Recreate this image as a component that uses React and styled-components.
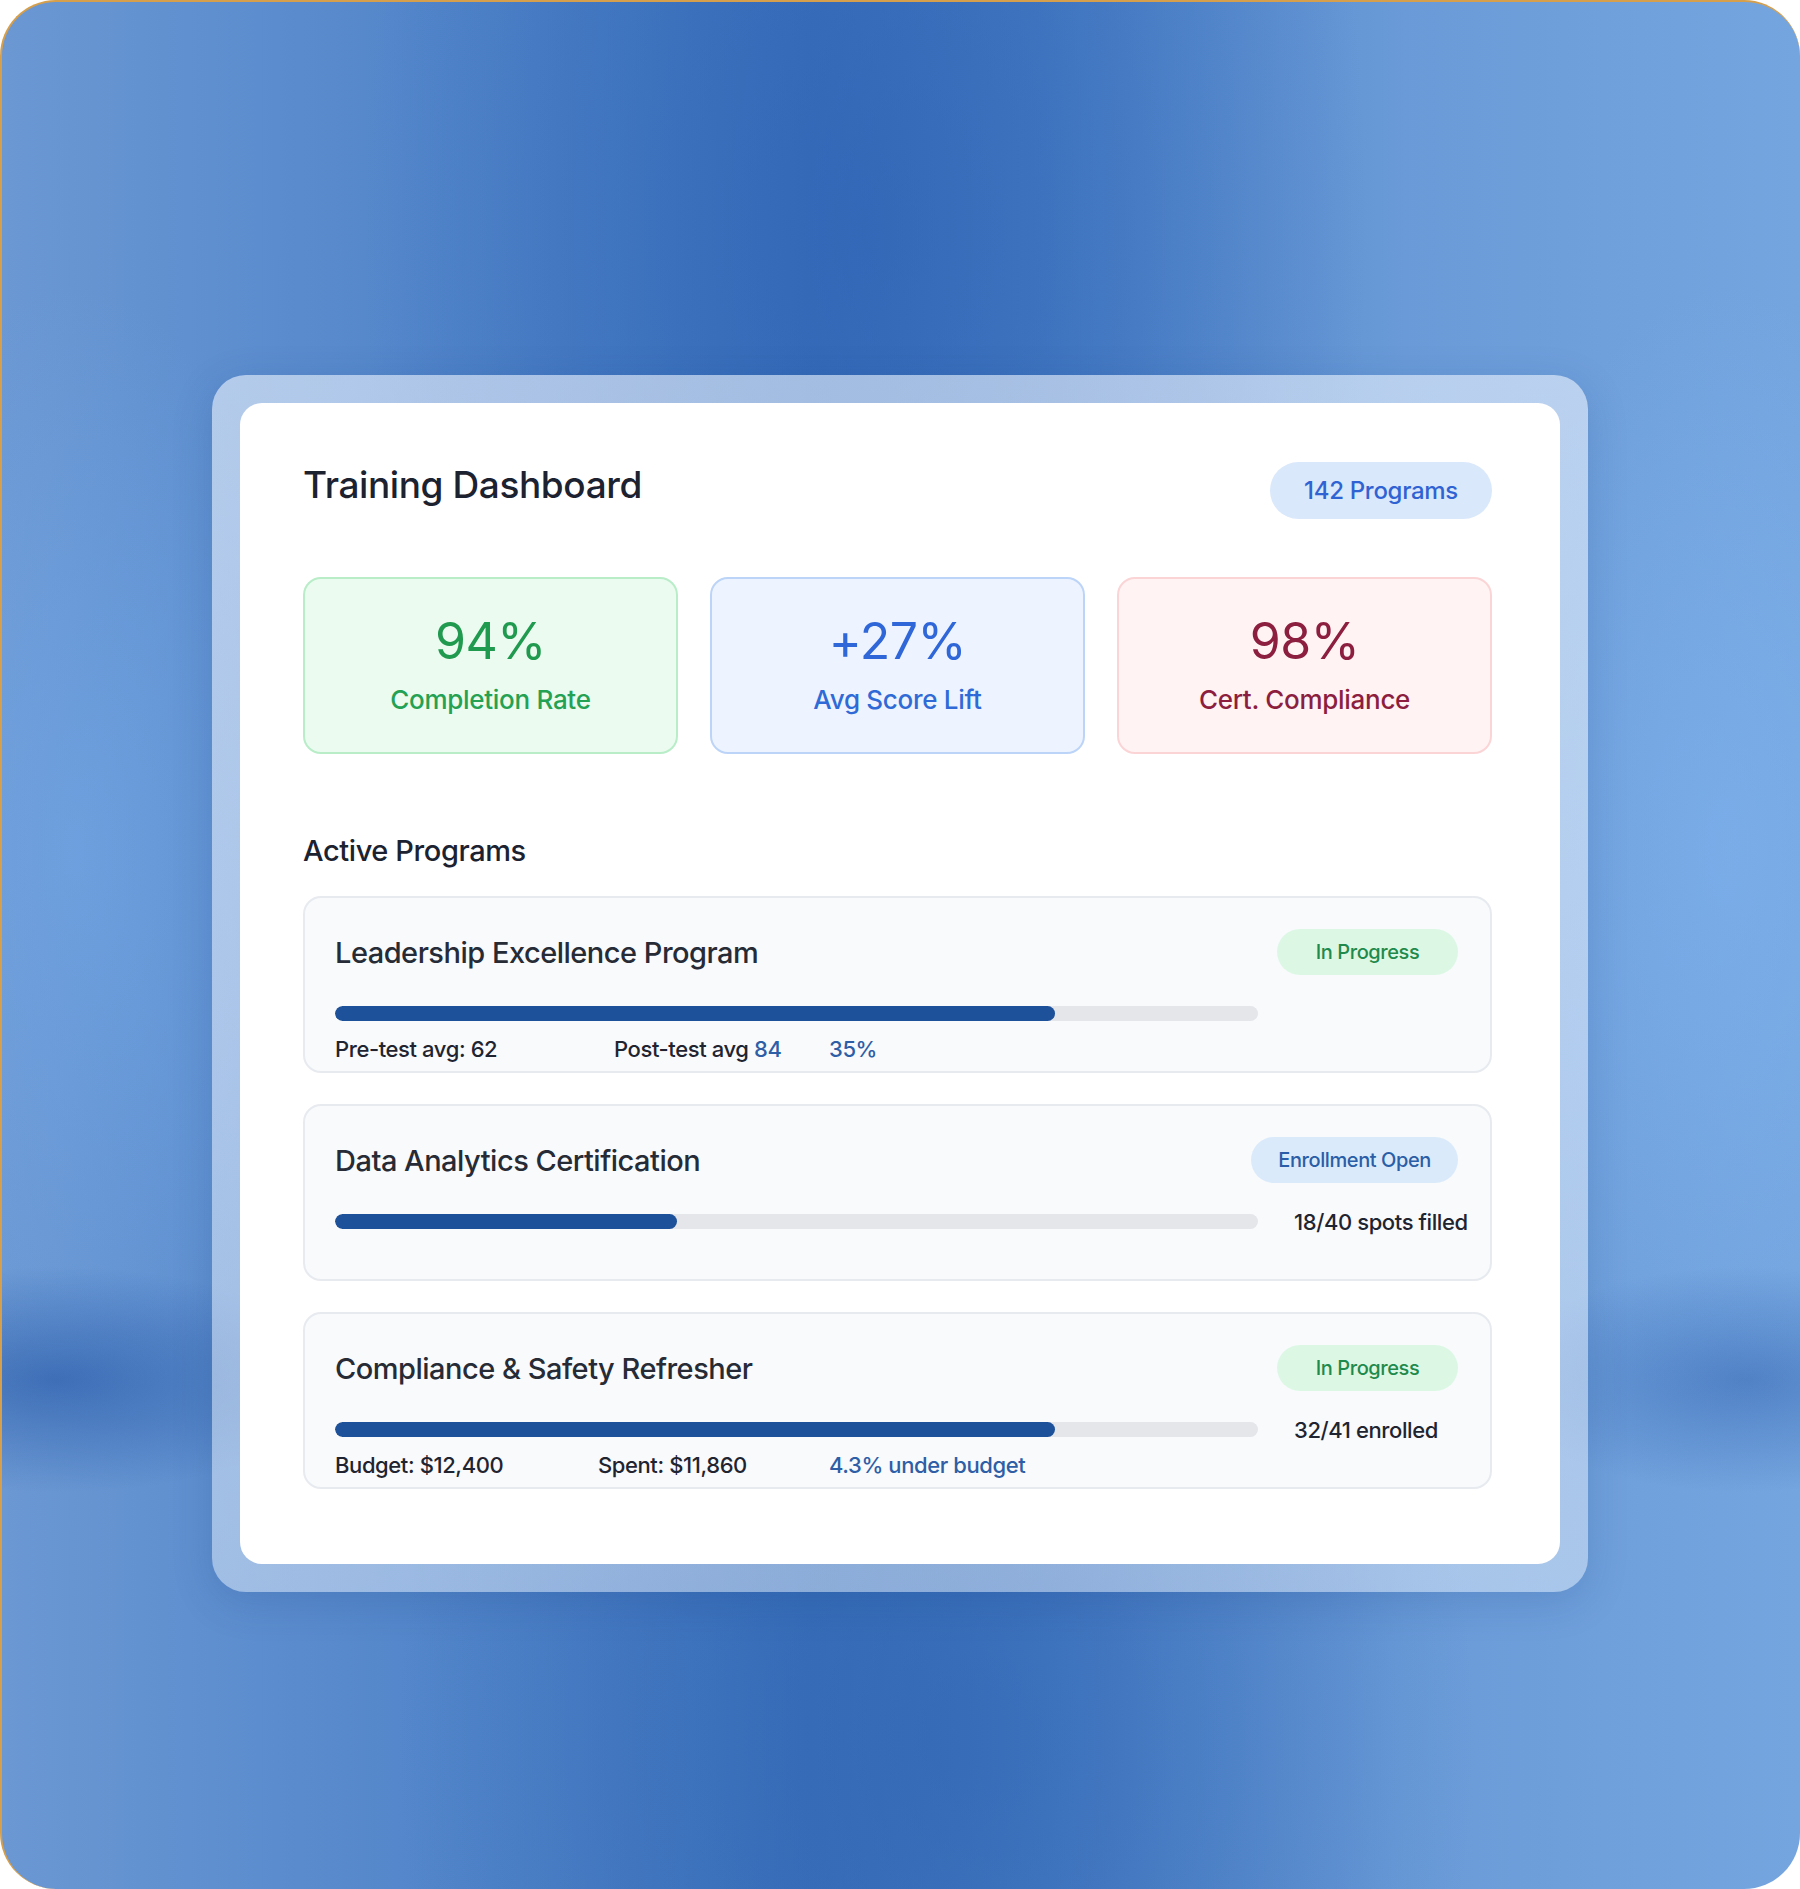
import React from "react";
import styled, { createGlobalStyle } from "styled-components";

const Global = createGlobalStyle`
  html, body { margin: 0; padding: 0; background: #ffffff; }
  body { font-family: Inter, "Noto Sans", "Liberation Sans", sans-serif; }
  * { box-sizing: border-box; }
`;

const Frame = styled.div`
  width: 1800px;
  height: 1889px;
  border-radius: 56px;
  border-top: 2px solid #d69f4c;
  border-left: 2px solid #d69f4c;
  overflow: hidden;
  display: flex;
  flex-direction: column;
  align-items: center;
  padding-top: 373px;
  padding-right: 2px;
  background:
    radial-gradient(ellipse 28% 55% at 48% 12%, rgba(38, 92, 176, 0.55), rgba(38, 92, 176, 0) 100%),
    radial-gradient(ellipse 30% 40% at 52% 92%, rgba(38, 92, 172, 0.5), rgba(38, 92, 172, 0) 100%),
    radial-gradient(ellipse 16% 6% at 3% 73%, rgba(28, 78, 160, 0.55), rgba(28, 78, 160, 0) 100%),
    radial-gradient(ellipse 14% 6% at 97% 73%, rgba(28, 78, 160, 0.4), rgba(28, 78, 160, 0) 100%),
    radial-gradient(ellipse 14% 30% at 96% 45%, rgba(130, 185, 245, 0.45), rgba(130, 185, 245, 0) 100%),
    radial-gradient(ellipse 14% 30% at 4% 45%, rgba(120, 175, 240, 0.4), rgba(120, 175, 240, 0) 100%),
    linear-gradient(90deg, #6b98d3 0%, #5487cb 22%, #3f75be 45%, #4a7fc6 58%, #6a9bd8 78%, #75a5df 100%);
`;

const Glass = styled.div`
  width: 1376px;
  padding: 28px;
  border-radius: 34px;
  background: linear-gradient(180deg, rgba(232, 240, 252, 0.62) 0%, rgba(226, 236, 250, 0.5) 100%);
  box-shadow: 0 10px 40px rgba(20, 60, 130, 0.18);
`;

const Card = styled.div`
  background: #ffffff;
  border-radius: 22px;
  padding: 59px 68px 75px 63px;
`;

const Header = styled.div`
  display: flex;
  align-items: center;
  justify-content: space-between;
  height: 57px;
  margin-bottom: 58px;
`;

const Title = styled.h1`
  margin: 0 0 12px 0;
  font-size: 37px;
  font-weight: 500;
  letter-spacing: -0.4px;
  color: #1c2230;
`;

const CountBadge = styled.div`
  height: 57px;
  padding: 0 34px;
  border-radius: 29px;
  background: #dae8fb;
  color: #2f63d3;
  font-size: 24px;
  font-weight: 500;
  letter-spacing: -0.3px;
  display: flex;
  align-items: center;
`;

const StatGrid = styled.div`
  display: grid;
  grid-template-columns: repeat(3, 1fr);
  gap: 32px;
`;

const palettes = {
  green: { bg: "#ebfbf0", border: "#b8edc8", value: "#1f9a4e", label: "#24a153" },
  blue: { bg: "#edf4ff", border: "#bcd4f7", value: "#2f66d8", label: "#2f6ad6" },
  red: { bg: "#fff3f3", border: "#fbd4d6", value: "#8c1f40", label: "#8c1f40" },
};

const StatCard = styled.div`
  height: 177px;
  border-radius: 18px;
  border: 2px solid ${(p) => palettes[p.$tone].border};
  background: ${(p) => palettes[p.$tone].bg};
  display: flex;
  flex-direction: column;
  align-items: center;
  justify-content: center;
  gap: 13px;
  padding-bottom: 4px;
`;

const StatValue = styled.div`
  font-size: 50px;
  line-height: 60px;
  font-weight: 400;
  letter-spacing: -0.5px;
  color: ${(p) => palettes[p.$tone].value};
`;

const StatLabel = styled.div`
  font-size: 26px;
  line-height: 32px;
  font-weight: 500;
  letter-spacing: -0.3px;
  color: ${(p) => palettes[p.$tone].label};
`;

const SectionTitle = styled.h2`
  margin: 79px 0 27px 0;
  font-size: 29px;
  line-height: 36px;
  font-weight: 500;
  letter-spacing: -0.4px;
  color: #1c2230;
`;

const ProgramList = styled.div`
  display: flex;
  flex-direction: column;
  gap: 31px;
`;

const ProgramCard = styled.div`
  border: 2px solid #e7eaef;
  border-radius: 18px;
  background: #f8fafc;
  padding: 31px 32px 8px 30px;
`;

const ProgramHead = styled.div`
  height: 46px;
  display: flex;
  align-items: center;
  justify-content: space-between;
  margin-bottom: 31px;
`;

const ProgramName = styled.div`
  font-size: 29px;
  font-weight: 500;
  letter-spacing: -0.5px;
  color: #262b36;
`;

const statusTones = {
  green: { bg: "#dcf8e5", fg: "#1f8a4c" },
  blue: { bg: "#dbeafb", fg: "#2a5ea6" },
};

const Status = styled.div`
  height: 46px;
  min-width: 181px;
  padding: 0 27px;
  border-radius: 23px;
  background: ${(p) => statusTones[p.$tone].bg};
  color: ${(p) => statusTones[p.$tone].fg};
  font-size: 20px;
  font-weight: 500;
  letter-spacing: -0.4px;
  display: flex;
  align-items: center;
  justify-content: center;
`;

const BarRow = styled.div`
  display: grid;
  grid-template-columns: 923px 1fr;
  grid-template-rows: 15px;
  column-gap: 36px;
  align-items: center;
`;

const Track = styled.div`
  height: 15px;
  border-radius: 8px;
  background: #e4e6ea;
  overflow: hidden;
`;

const Fill = styled.div`
  height: 100%;
  border-radius: 8px;
  background: #1d5199;
`;

const SideText = styled.div`
  font-size: 22px;
  line-height: 26px;
  font-weight: 500;
  letter-spacing: -0.4px;
  color: #1f2430;
  white-space: nowrap;
`;

const StatsRow = styled.div`
  display: grid;
  grid-template-columns: ${(p) => p.$cols};
  margin-top: 14px;
  min-height: 28px;
  align-items: center;
`;

const StatText = styled.span`
  font-size: 22px;
  font-weight: 500;
  letter-spacing: -0.4px;
  color: #1f2430;
  white-space: nowrap;
`;

const Accent = styled.span`
  color: #2e5ea6;
`;

const stats = [
  { tone: "green", value: "94%", label: "Completion Rate" },
  { tone: "blue", value: "+27%", label: "Avg Score Lift" },
  { tone: "red", value: "98%", label: "Cert. Compliance" },
];

const programs = [
  {
    name: "Leadership Excellence Program",
    status: "In Progress",
    tone: "green",
    progress: 78,
    side: "",
    cols: "279px 215px 1fr",
    items: [
      { text: "Pre-test avg: 62" },
      { text: "Post-test avg ", accent: "84" },
      { accent: "35%" },
    ],
  },
  {
    name: "Data Analytics Certification",
    status: "Enrollment Open",
    tone: "blue",
    progress: 37,
    side: "18/40 spots filled",
    cols: "1fr",
    items: [],
  },
  {
    name: "Compliance & Safety Refresher",
    status: "In Progress",
    tone: "green",
    progress: 78,
    side: "32/41 enrolled",
    cols: "263px 231px 1fr",
    items: [
      { text: "Budget: $12,400" },
      { text: "Spent: $11,860" },
      { accent: "4.3% under budget" },
    ],
  },
];

export default function App() {
  return (
    <>
      <Global />
      <Frame>
        <Glass>
          <Card>
            <Header>
              <Title>Training Dashboard</Title>
              <CountBadge>142 Programs</CountBadge>
            </Header>
            <StatGrid>
              {stats.map((s) => (
                <StatCard key={s.label} $tone={s.tone}>
                  <StatValue $tone={s.tone}>{s.value}</StatValue>
                  <StatLabel $tone={s.tone}>{s.label}</StatLabel>
                </StatCard>
              ))}
            </StatGrid>
            <SectionTitle>Active Programs</SectionTitle>
            <ProgramList>
              {programs.map((p) => (
                <ProgramCard key={p.name}>
                  <ProgramHead>
                    <ProgramName>{p.name}</ProgramName>
                    <Status $tone={p.tone}>{p.status}</Status>
                  </ProgramHead>
                  <BarRow>
                    <Track>
                      <Fill style={{ width: `${p.progress}%` }} />
                    </Track>
                    <SideText>{p.side}</SideText>
                  </BarRow>
                  <StatsRow $cols={p.cols}>
                    {p.items.map((it, i) => (
                      <StatText key={i}>
                        {it.text}
                        {it.accent && <Accent>{it.accent}</Accent>}
                      </StatText>
                    ))}
                  </StatsRow>
                </ProgramCard>
              ))}
            </ProgramList>
          </Card>
        </Glass>
      </Frame>
    </>
  );
}
